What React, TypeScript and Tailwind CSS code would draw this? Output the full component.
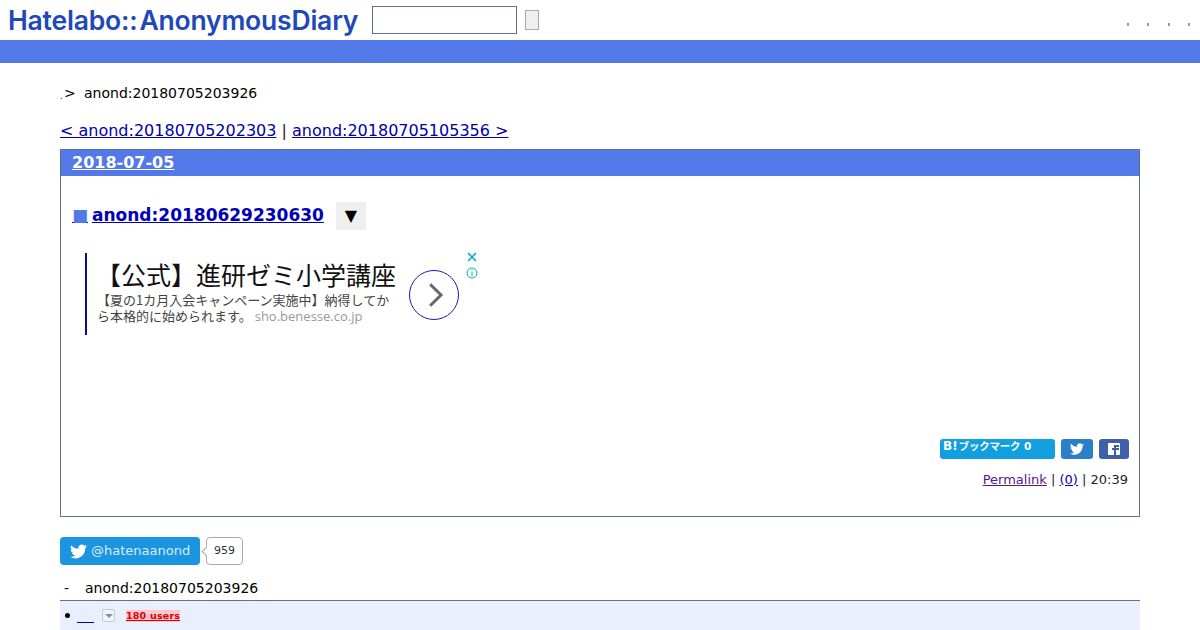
import React from "react";

const Bird = ({ className }: { className: string }) => (
  <svg viewBox="0 0 24 24" className={className} fill="currentColor">
    <path d="M23.95 4.57a10 10 0 0 1-2.82.77 4.96 4.96 0 0 0 2.16-2.72c-.95.55-2 .95-3.13 1.18a4.92 4.92 0 0 0-8.38 4.48C7.69 8.1 4.07 6.13 1.64 3.16a4.82 4.82 0 0 0-.66 2.47c0 1.71.87 3.21 2.19 4.1a4.9 4.9 0 0 1-2.23-.61v.06c0 2.39 1.7 4.38 3.95 4.83a5 5 0 0 1-2.21.08 4.94 4.94 0 0 0 4.6 3.42A9.87 9.87 0 0 1 0 19.54a14 14 0 0 0 7.56 2.21c9.05 0 14-7.5 14-13.98 0-.21 0-.42-.02-.63a9.94 9.94 0 0 0 2.46-2.55z" />
  </svg>
);

const Blank = () => <span className="w-[2px] h-[3px] bg-[#999]" />;

export default function App() {
  return (
    <div className="w-[1200px] h-[630px] overflow-hidden bg-white text-black font-['DejaVu_Sans',sans-serif]">
      <header className="h-[40px] flex items-center pl-[8px] pr-[10px]">
        <div className="w-[364px] font-['Inter',sans-serif] font-semibold text-[26.5px] leading-[40px] text-[#2148b8] tracking-[-0.2px] whitespace-nowrap">
          Hatelabo::<span className="ml-[2px]">AnonymousDiary</span>
        </div>
        <div className="w-[145px] h-[28px] border border-[#5b7399] bg-white" />
        <div className="ml-[8px] w-[14px] h-[20px] bg-[#efefef] border border-[#aaa]" />
        <div className="ml-auto flex gap-[18.5px] pt-[8px]">
          <Blank />
          <Blank />
          <Blank />
          <Blank />
        </div>
      </header>
      <div className="h-[23px] bg-[#5279e7]" />

      <main className="px-[60px]">
        <div className="h-[17px] mt-[22px] flex items-center text-[14px] leading-[17px]">
          <span className="text-[8px] w-[4px] mt-[6px]">.</span>
          <span className="w-[20px]">&gt;</span>
          <span>anond:20180705203926</span>
        </div>

        <div className="mt-[19px] h-[19px] text-[16px] leading-[19px] whitespace-nowrap text-[#222]">
          <a className="underline text-[#0000a8]">&lt; anond:20180705202303</a>
          <span> | </span>
          <a className="underline text-[#0000a8]">anond:20180705105356 &gt;</a>
        </div>

        <section className="mt-[9px] h-[368px] border border-[#5b6f9b] flex flex-col">
          <h2 className="h-[26px] bg-[#5279e7] pl-[11px] text-[16px] leading-[26px] font-bold text-white underline">
            2018-07-05
          </h2>

          <div className="mt-[26px] h-[28px] pl-[11px] flex items-center">
            <a className="-mt-[2px] text-[17px] leading-[26px] font-bold text-[#0000b8] underline whitespace-nowrap">
              <span className="text-[#5279e7] font-normal text-[17px] inline-block w-[16px] overflow-visible underline decoration-[#0000b8]">■</span>
              <span className="inline-block w-[4px]" />
              anond:20180629230630
            </a>
            <span className="ml-[12px] w-[30px] h-[28px] bg-[#efefef] flex items-center justify-center text-[16px]">▼</span>
          </div>

          <div className="mt-[23px] ml-[24px] w-[388px] h-[82px] flex relative">
            <div className="w-[2px] h-[82px] bg-[#0b0b8f]" />
            <div className="ml-[10px] w-[300px] font-['Noto_Sans_CJK_JP','DejaVu_Sans',sans-serif]">
              <div className="mt-[4px] h-[35px] text-[25px] leading-[35px] text-[#111] whitespace-nowrap -ml-[1px]">【公式】進研ゼミ小学講座</div>
              <div className="text-[13px] leading-[16px] text-[#444] whitespace-nowrap">【夏の1カ月入会キャンペーン実施中】納得してか</div>
              <div className="text-[13px] leading-[16px] text-[#444] whitespace-nowrap">
                ら本格的に始められます。
                <span className="ml-[3px] text-[#999] font-['Open_Sans',sans-serif]">sho.benesse.co.jp</span>
              </div>
            </div>
            <div className="absolute left-[324px] top-[17px] w-[50px] h-[50px] rounded-full border border-[#1a1ab0] flex items-center justify-center">
              <svg viewBox="0 0 24 32" className="w-[20px] h-[30px] ml-[3px]" fill="none" stroke="#666" strokeWidth="3.5">
                <path d="M5 3l13 13L5 29" />
              </svg>
            </div>
            <svg viewBox="0 0 12 12" className="absolute left-[381px] top-[-2px] w-[12px] h-[12px]" stroke="#00aecd" strokeWidth="1.5">
              <path d="M2 2l8 8M10 2l-8 8" />
            </svg>
            <svg viewBox="0 0 12 12" className="absolute left-[381px] top-[14px] w-[12px] h-[12px]" fill="none" stroke="#00aecd" strokeWidth="1">
              <circle cx="6" cy="6" r="5" />
              <path d="M6 5v4M6 3v1" />
            </svg>
          </div>

          <div className="mt-[104px] pr-[10px] flex justify-end gap-[6px]">
            <div className="w-[115px] h-[20px] rounded-[3px] bg-[#129fe0] pl-[3px] text-white leading-[14px] font-bold font-['DejaVu_Sans','Noto_Sans_CJK_JP',sans-serif] whitespace-nowrap flex items-start gap-[1px]">
              <span className="text-[12px] leading-[15px]">B!</span>
              <span className="text-[10.5px] leading-[15px] tracking-[-0.2px]">ブックマーク 0</span>
            </div>
            <div className="w-[32px] h-[20px] rounded-[3px] bg-[#2b7fc9] flex items-center justify-center text-white">
              <Bird className="w-[14px] h-[14px]" />
            </div>
            <div className="w-[30px] h-[20px] rounded-[3px] bg-[#3f5fa8] flex items-center justify-center">
              <span className="w-[12px] h-[12px] rounded-[1px] bg-white relative overflow-hidden">
                <span className="absolute left-[6px] top-[2px] w-[2px] h-[11px] bg-[#3f5fa8]" />
                <span className="absolute left-[4px] top-[5px] w-[7px] h-[2px] bg-[#3f5fa8]" />
                <span className="absolute left-[6px] top-[2px] w-[5px] h-[2px] bg-[#3f5fa8]" />
              </span>
            </div>
          </div>

          <div className="mt-[13px] pr-[11px] text-right text-[13px] leading-[16px] text-[#222]">
            <a className="underline text-[#551a8b]">Permalink</a>
            <span> | </span>
            <a className="underline text-[#0000b8]">(0)</a>
            <span> | 20:39</span>
          </div>
        </section>

        <div className="mt-[20px] h-[28px] flex items-center">
          <div className="w-[140px] h-[28px] rounded-[4px] bg-[#1b95e0] flex items-center pl-[10px] text-[13px] text-[#d6ecfa]">
            <Bird className="w-[17px] h-[17px] text-white" />
            <span className="ml-[4px]">@hatenaanond</span>
          </div>
          <div className="relative ml-[6px] w-[37px] h-[28px] rounded-[4px] border border-[#aaa] bg-white flex items-center justify-center text-[11px] text-[#333]">
            <span className="absolute left-[-4px] top-[10px] w-[7px] h-[7px] rotate-45 bg-white border-l border-b border-[#aaa]" />
            <span className="relative">959</span>
          </div>
        </div>

        <div className="mt-[15px] h-[17px] flex items-center text-[14px] leading-[17px]">
          <span className="ml-[4px] w-[21px]">-</span>
          <span>anond:20180705203926</span>
        </div>

        <div className="mt-[3px] h-[30px] border-t border-[#5b6f9b] bg-[#e9effb] flex items-center pl-[5px]">
          <span className="w-[5px] h-[5px] rounded-full bg-black" />
          <span className="ml-[7px] mt-[13px] w-[17px] h-[1px] bg-[#0000b8]" />
          <span className="ml-[8px] w-[13px] h-[13px] border border-[#c4c8d4] rounded-[2px] bg-[#f2f4f8] flex items-center justify-center">
            <span className="w-0 h-0 border-l-[4px] border-r-[4px] border-t-[4px] border-l-transparent border-r-transparent border-t-[#7a8fb5]" />
          </span>
          <span className="ml-[11px] text-[9.5px] leading-[12px] tracking-[0.2px] font-bold text-[#d80000] bg-[#ffc4cc] underline">180 users</span>
        </div>
      </main>
    </div>
  );
}
